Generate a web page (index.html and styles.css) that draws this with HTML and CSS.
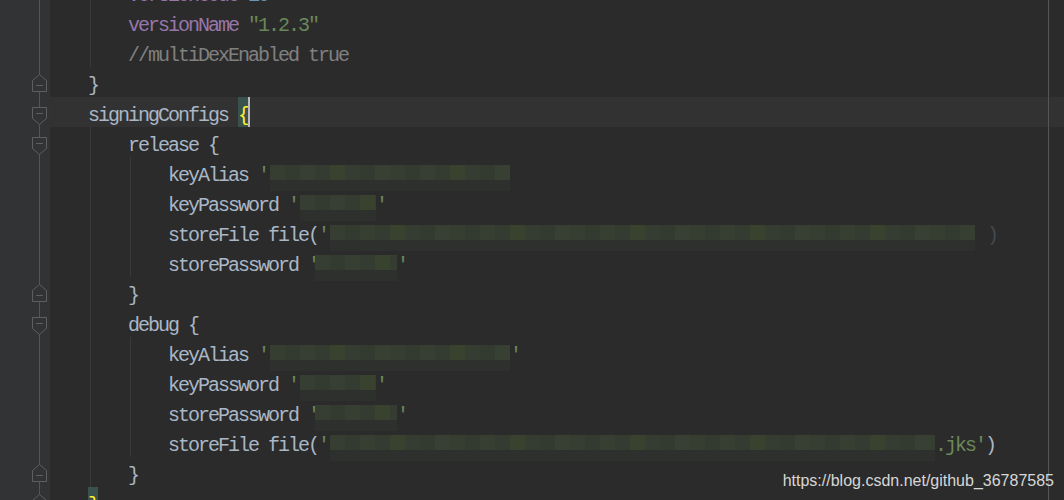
FILE: index.html
```html
<!DOCTYPE html>
<html>
<head>
<meta charset="utf-8">
<link rel="stylesheet" href="styles.css">
</head>
<body>
<div class="editor">
  <div class="gutter">
    <div class="gr"></div>
    <div class="gr"></div>
    <div class="gr"></div>
    <div class="gr end"><svg width="16" height="19" viewBox="0 0 16 19"><polygon points="7.5,0.5 14.5,6.5 14.5,17.5 0.5,17.5 0.5,6.5" /><line x1="4" y1="11.5" x2="11" y2="11.5"/></svg></div>
    <div class="gr start"><svg width="16" height="19" viewBox="0 0 16 19"><polygon points="0.5,0.5 14.5,0.5 14.5,11.5 7.5,17.5 0.5,11.5" /><line x1="4" y1="6.5" x2="11" y2="6.5"/></svg></div>
    <div class="gr start"><svg width="16" height="19" viewBox="0 0 16 19"><polygon points="0.5,0.5 14.5,0.5 14.5,11.5 7.5,17.5 0.5,11.5" /><line x1="4" y1="6.5" x2="11" y2="6.5"/></svg></div>
    <div class="gr"></div>
    <div class="gr"></div>
    <div class="gr"></div>
    <div class="gr"></div>
    <div class="gr end"><svg width="16" height="19" viewBox="0 0 16 19"><polygon points="7.5,0.5 14.5,6.5 14.5,17.5 0.5,17.5 0.5,6.5" /><line x1="4" y1="11.5" x2="11" y2="11.5"/></svg></div>
    <div class="gr start"><svg width="16" height="19" viewBox="0 0 16 19"><polygon points="0.5,0.5 14.5,0.5 14.5,11.5 7.5,17.5 0.5,11.5" /><line x1="4" y1="6.5" x2="11" y2="6.5"/></svg></div>
    <div class="gr"></div>
    <div class="gr"></div>
    <div class="gr"></div>
    <div class="gr"></div>
    <div class="gr end"><svg width="16" height="19" viewBox="0 0 16 19"><polygon points="7.5,0.5 14.5,6.5 14.5,17.5 0.5,17.5 0.5,6.5" /><line x1="4" y1="11.5" x2="11" y2="11.5"/></svg></div>
    <div class="gr end"><svg width="16" height="19" viewBox="0 0 16 19"><polygon points="7.5,0.5 14.5,6.5 14.5,17.5 0.5,17.5 0.5,6.5" /><line x1="4" y1="11.5" x2="11" y2="11.5"/></svg></div>
  </div>
  <div class="code">
<div class="ln g1">    <span class="kw">versionCode</span> <span class="num">10</span></div>
<div class="ln g1">    <span class="kw">versionName</span> <span class="str">"1.2.3"</span></div>
<div class="ln g1">    <span class="cm">//multiDexEnabled true</span></div>
<div class="ln">}</div>
<div class="ln cur">signingConfigs <span class="match">{</span><span class="caret"></span></div>
<div class="ln g1">    release {</div>
<div class="ln g2">        keyAlias <span class="str">'</span><span class="mz w-alias"></span></div>
<div class="ln g2">        keyPassword <span class="str">'</span><span class="mz w-pass"></span><span class="str">'</span></div>
<div class="ln g2">        storeFile file(<span class="str">'</span><span class="mz w-file"></span><span class="dim">)</span></div>
<div class="ln g2">        storePassword <span class="str">'</span><span class="mz w-spass"></span><span class="str">'</span></div>
<div class="ln g1">    }</div>
<div class="ln g1">    debug {</div>
<div class="ln g2">        keyAlias <span class="str">'</span><span class="mz w-alias"></span><span class="str">'</span></div>
<div class="ln g2">        keyPassword <span class="str">'</span><span class="mz w-pass"></span><span class="str">'</span></div>
<div class="ln g2">        storePassword <span class="str">'</span><span class="mz w-spass"></span><span class="str">'</span></div>
<div class="ln g2">        storeFile file(<span class="str">'</span><span class="mz w-jks"></span><span class="str">.jks'</span>)</div>
<div class="ln g1">    }</div>
<div class="ln"><span class="match">}</span></div>
  </div>
</div>
<div class="watermark">https://blog.csdn.net/github_36787585</div>
</body>
</html>
```

FILE: styles.css
```css
html, body {
  margin: 0;
  padding: 0;
}
body {
  width: 1064px;
  height: 500px;
  overflow: hidden;
  background: #2b2b2b;
  position: relative;
}
.editor {
  display: flex;
  margin-top: -23px;
}
.gutter {
  width: 50px;
  flex: none;
  background-color: #313335;
  background-image: linear-gradient(#555555, #555555);
  background-size: 1px 100%;
  background-position: 39px 0;
  background-repeat: no-repeat;
}
.gr {
  height: 30px;
  box-sizing: border-box;
  padding-left: 32px;
}
.gr svg {
  display: block;
}
.gr polygon {
  fill: #313335;
  stroke: #5f5f5f;
  stroke-width: 1;
}
.gr line {
  stroke: #5f5f5f;
  stroke-width: 1;
}
.gr.end {
  padding-top: 7px;
}
.gr.start {
  padding-top: 10px;
}
.code {
  flex: 1;
  position: relative;
  font-family: "Liberation Mono", monospace;
  font-size: 20px;
  letter-spacing: -2px;
  color: #a9b7c6;
}
.code::after {
  content: "";
  position: absolute;
  top: 0;
  bottom: 0;
  left: 998px;
  width: 1px;
  background: #555555;
}
.ln {
  height: 30px;
  line-height: 38px;
  padding-left: 38px;
  white-space: pre;
  background-repeat: no-repeat;
}
.ln.cur {
  background-color: #323232;
}
.ln.g1 {
  background-image: linear-gradient(#3a3a3a, #3a3a3a);
  background-size: 1px 100%;
  background-position: 40px 0;
}
.ln.g2 {
  background-image: linear-gradient(#3a3a3a, #3a3a3a), linear-gradient(#3a3a3a, #3a3a3a);
  background-size: 1px 100%, 1px 100%;
  background-position: 40px 0, 80px 0;
}
.kw { color: #9876aa; }
.num { color: #6897bb; }
.str { color: #6a8759; }
.cm { color: #808080; }
.dim { color: #434a52; margin-left: 12px; }
.match {
  display: inline-block;
  height: 30px;
  background: #3b514d;
  color: #ffef28;
}
.caret {
  display: inline-block;
  width: 2px;
  height: 30px;
  background: #bbbbbb;
  vertical-align: top;
}
.mz {
  display: inline-block;
  height: 15px;
  vertical-align: 1px;
  margin-left: 2px;
  background-image: linear-gradient(90deg,
    #363e32 0 15px, #333a30 15px 30px, #373f32 30px 45px,
    #343b30 45px 60px, #39422f 60px 75px, #353c31 75px 90px,
    #333b30 90px 105px, #384033 105px 120px);
  background-size: 120px 100%;
  box-shadow: 0 11px 0 #2e302d;
}
.w-alias { width: 240px; }
.w-pass { width: 76px; }
.w-file { width: 645px; }
.w-spass { width: 82px; margin-left: -3px; }
.w-jks { width: 605px; }
.watermark {
  position: absolute;
  right: 10px;
  top: 472px;
  font-family: "Liberation Sans", Arial, sans-serif;
  font-size: 16px;
  color: rgba(255, 255, 255, 0.82);
}
```
